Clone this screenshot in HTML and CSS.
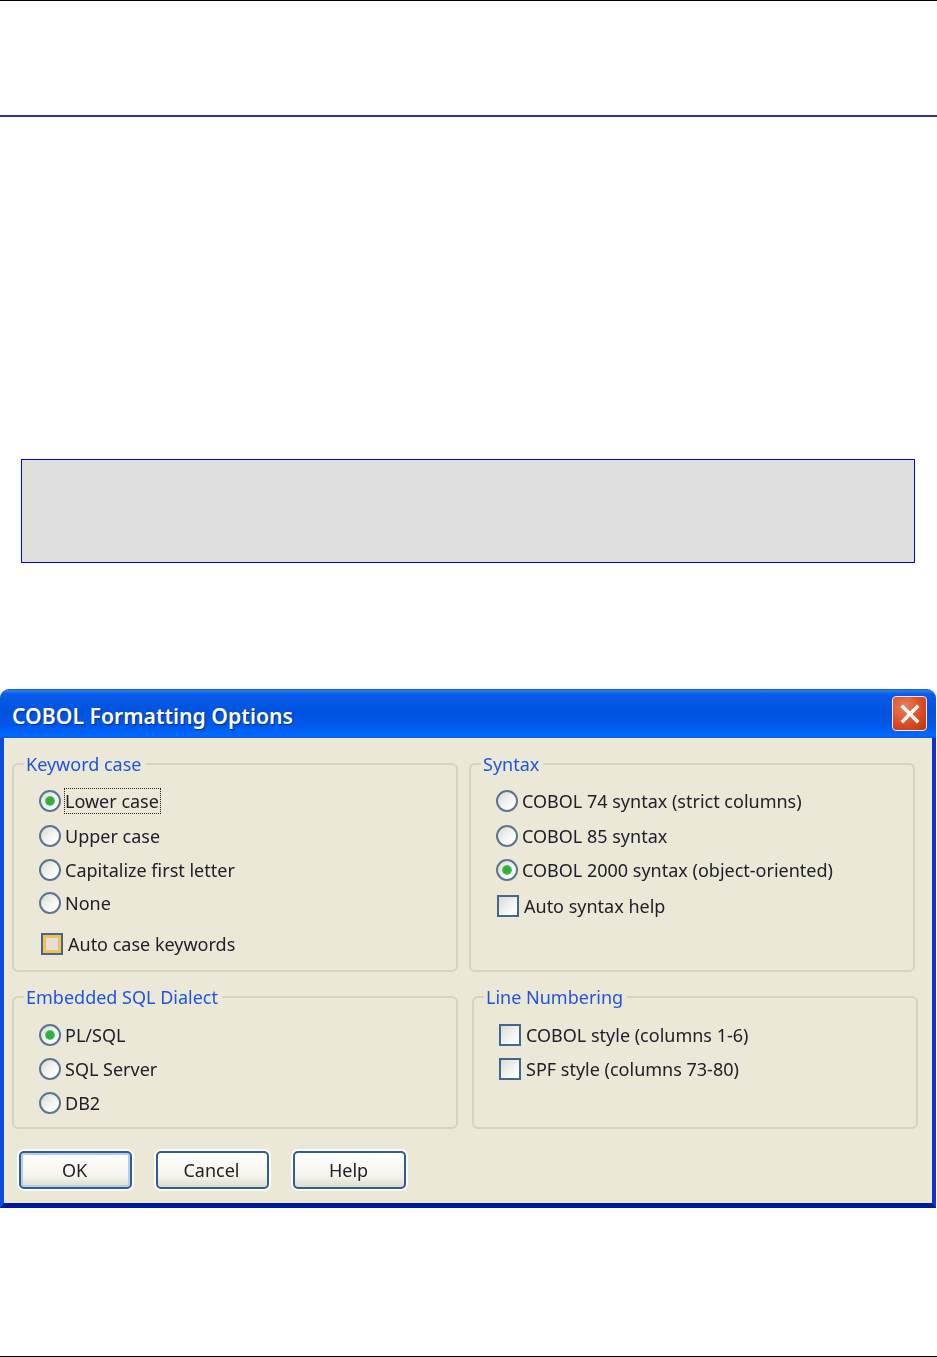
FILE: index.html
```html
<!DOCTYPE html>
<html lang="en">
<head>
<meta charset="utf-8">
<title>COBOL Formatting Options</title>
<link rel="stylesheet" href="styles.css">
</head>
<body>
<div class="page">
  <header class="page-header"></header>
  <div class="note"></div>
  <section class="dialog">
    <div class="titlebar">
      <h1 class="title">COBOL Formatting Options</h1>
      <span class="close">
        <svg viewBox="0 0 20 20" width="20" height="20"><path d="M3 3 L17 17 M17 3 L3 17" stroke="#fff" stroke-width="3.4" stroke-linecap="square"/></svg>
      </span>
    </div>
    <div class="dialog-body">
      <div class="group-row">
        <fieldset class="group group-tall">
          <legend>Keyword case</legend>
          <div class="opt"><span class="radio on"></span><span class="focus">Lower case</span></div>
          <div class="opt"><span class="radio"></span>Upper case</div>
          <div class="opt"><span class="radio"></span>Capitalize first letter</div>
          <div class="opt opt-none"><span class="radio"></span>None</div>
          <div class="opt opt-auto check-2"><span class="check hover"></span>Auto case keywords</div>
        </fieldset>
        <fieldset class="group group-tall">
          <legend>Syntax</legend>
          <div class="opt"><span class="radio"></span>COBOL 74 syntax (strict columns)</div>
          <div class="opt"><span class="radio"></span>COBOL 85 syntax</div>
          <div class="opt"><span class="radio on"></span>COBOL 2000 syntax (object-oriented)</div>
          <div class="opt opt-help check-1"><span class="check"></span>Auto syntax help</div>
        </fieldset>
      </div>
      <div class="group-row group-row-low">
        <fieldset class="group group-short">
          <legend>Embedded SQL Dialect</legend>
          <div class="opt opt-low"><span class="radio on"></span>PL/SQL</div>
          <div class="opt opt-low"><span class="radio"></span>SQL Server</div>
          <div class="opt opt-low"><span class="radio"></span>DB2</div>
        </fieldset>
        <fieldset class="group group-short">
          <legend>Line Numbering</legend>
          <div class="opt opt-low"><span class="check"></span>COBOL style (columns 1-6)</div>
          <div class="opt opt-low"><span class="check"></span>SPF style (columns 73-80)</div>
        </fieldset>
      </div>
      <div class="buttons">
        <button class="btn btn-default" type="button">OK</button>
        <button class="btn" type="button">Cancel</button>
        <button class="btn" type="button">Help</button>
      </div>
    </div>
  </section>
  <footer class="page-footer"></footer>
</div>
</body>
</html>
```
FILE: styles.css
```css
* { box-sizing: border-box; }
html, body { margin: 0; padding: 0; background: #fff; }
body { font-family: "Noto Sans", "Liberation Sans", sans-serif; }

.page {
  min-height: 1357px;
  display: flex;
  flex-direction: column;
  border-top: 1px solid #000;
}
.page-header {
  height: 116px;
  border-bottom: 2px solid #333399;
}
.note {
  height: 104px;
  margin: 342px 22px 0 21px;
  background: #dfdfdf;
  border: 1px solid #0000e0;
}
.page-footer {
  margin-top: auto;
  height: 1px;
  background: #000;
}

.dialog {
  width: 936px;
  margin-top: 126px;
  border-radius: 9px 9px 0 0;
  overflow: hidden;
  filter: blur(0.5px);
}
.titlebar {
  height: 49px;
  display: flex;
  align-items: center;
  justify-content: space-between;
  padding: 0 9px 0 12px;
  background: linear-gradient(#0a5fe8 0, #2a7bf5 2px, #0a5ce6 5px, #0053e0 24px, #0058ea 36px, #0068ff 46px, #0060f0 49px);
}
.title {
  margin: 4px 0 0;
  font-size: 21.2px;
  font-weight: 600;
  line-height: 26px;
  color: #fff;
  text-shadow: 1px 1px 1px #0a2f90;
}
.close {
  width: 35px;
  height: 35px;
  display: flex;
  align-items: center;
  justify-content: center;
  border: 1.5px solid #f4e8e2;
  border-radius: 4px;
  background: radial-gradient(circle at 35% 30%, #e9805c, #d9491f 60%, #b93208);
}

.dialog-body {
  height: 470px;
  background: #ebe8d8;
  border-style: solid;
  border-width: 0 4px 5px;
  border-color: #0a4fe0 #0a35c8 #00189a #0a4fe0;
  padding: 16px 0 0 8px;
}
.group-row {
  display: flex;
  gap: 11px;
}
.group-row-low {
  gap: 14px;
  margin-top: 15px;
}
.group {
  width: 446px;
  margin: 0;
  min-width: 0;
  padding: 10px 0 0 25px;
  border: 2px solid #d6d3c2;
  border-radius: 6px;
}
.group-tall { height: 218px; }
.group-short { height: 142px; padding-top: 11px; }
.group legend {
  margin-left: -15px;
  padding: 0 4px 0 2px;
  font-size: 18px;
  line-height: 20px;
  color: #1f55dc;
}
.opt {
  height: 34.5px;
  display: flex;
  align-items: center;
  gap: 4px;
  font-size: 18px;
  color: #20202a;
}
.opt-low { height: 34px; }
.opt-none { margin-top: -2px; }
.opt-auto { margin-top: 7px; }
.opt-help { margin-top: 1.5px; }
.check-2 { margin-left: 2px; }
.check-1 { margin-left: 1px; }
.radio {
  position: relative;
  flex: none;
  width: 22px;
  height: 22px;
  border: 2px solid #5a7690;
  border-radius: 50%;
  background: linear-gradient(135deg, #dcdcd4, #fff 80%);
}
.radio.on::after {
  content: "";
  position: absolute;
  left: 4px;
  top: 4px;
  width: 10px;
  height: 10px;
  border-radius: 50%;
  background: radial-gradient(circle, #2fae3c 45%, #a5dba8 100%);
}
.check {
  flex: none;
  width: 22px;
  height: 22px;
  margin-right: 1px;
  border: 2px solid #3f6a90;
  background: linear-gradient(135deg, #dcdcd4, #fff 85%);
}
.check.hover {
  background: #e2e0d6;
  box-shadow: inset 0 0 0 3px #f8bd55;
}
.focus {
  margin: 0;
  padding: 0 1px 0 0;
  outline: 1.5px dotted #222;
  line-height: 24px;
}
.buttons {
  display: flex;
  gap: 24px;
  margin-top: 22px;
  padding-left: 7px;
}
.btn {
  width: 113px;
  height: 38px;
  padding: 0 2px 0 0;
  font: 18px "Noto Sans", "Liberation Sans", sans-serif;
  color: #20202a;
  border: 2px solid #2f5f8c;
  border-radius: 5px;
  background: linear-gradient(#fff, #f3f2ea 70%, #dedbcd);
  box-shadow: 0 0 0 2px #fbfaf6;
}
.btn-default {
  box-shadow: 0 0 0 2px #fbfaf6, inset 0 0 0 2px #b7cdf0;
}
```
